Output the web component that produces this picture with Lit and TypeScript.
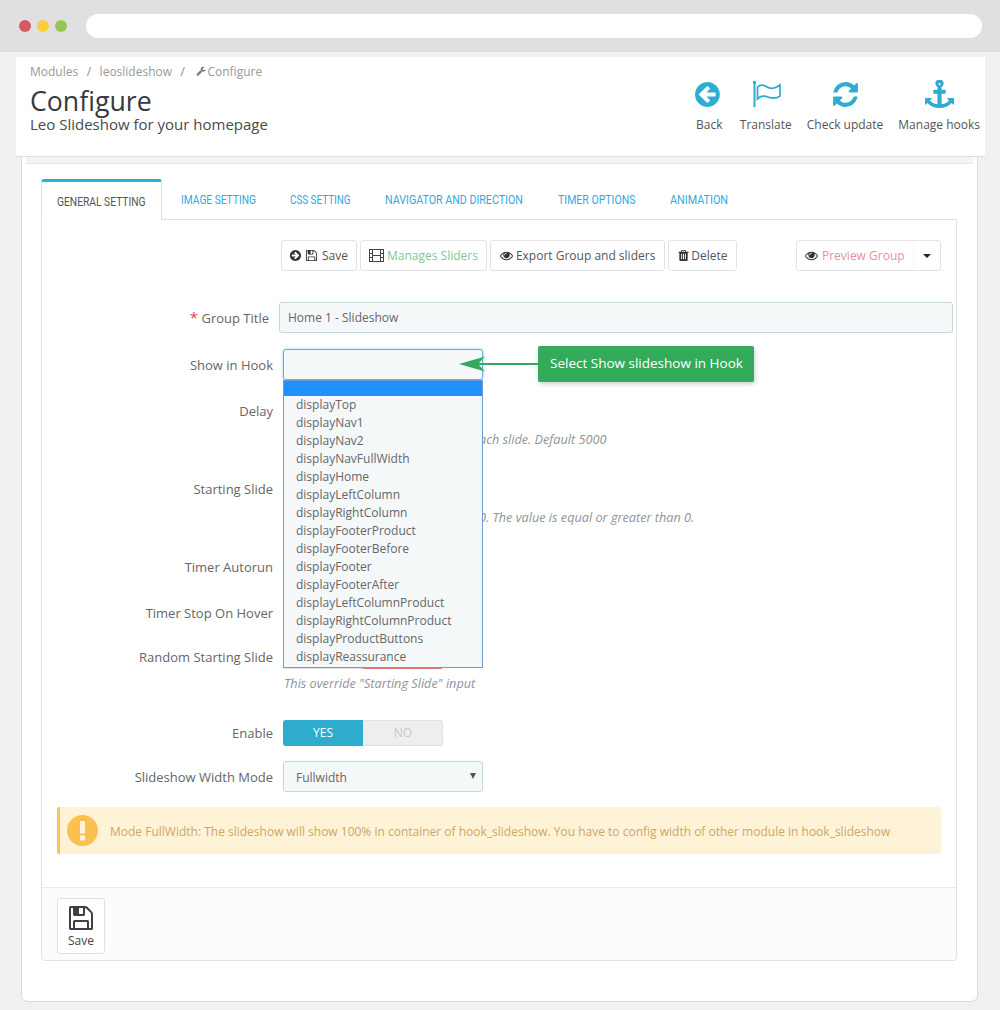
import { LitElement, html, css } from "lit";
import { customElement } from "lit/decorators.js";

const P: Record<string, string> = {
  arrowLeft: "M1280 960v-128q0-26-19-45t-45-19h-502l189-189q19-19 19-45t-19-45l-91-91q-18-18-45-18t-45 18l-362 362-91 91q-18 18-18 45t18 45l91 91 362 362q18 18 45 18t45-18l91-91q18-18 18-45t-18-45l-189-189h502q26 0 45-19t19-45zm256-64q0 209-103 385.5t-279.5 279.5-385.5 103-385.5-103-279.5-279.5-103-385.5 103-385.5 279.5-279.5 385.5-103 385.5 103 279.5 279.5 103 385.5z",
  refresh: "M1639 1056q0 5-1 7-64 268-268 434.5t-478 166.5q-146 0-282.5-55t-243.5-157l-129 129q-19 19-45 19t-45-19-19-45v-448q0-26 19-45t45-19h448q26 0 45 19t19 45-19 45l-137 137q71 66 161 102t187 36q134 0 250-65t186-179q11-17 53-117 8-23 30-23h192q13 0 22.5 9.5t9.5 22.5zm25-800v448q0 26-19 45t-45 19h-448q-26 0-45-19t-19-45 19-45l138-138q-148-137-349-137-134 0-250 65t-186 179q-11 17-53 117-8 23-30 23h-199q-13 0-22.5-9.5t-9.5-22.5v-7q65-268 270-434.5t480-166.5q146 0 284 55.5t245 156.5l130-129q19-19 45-19t45 19 19 45z",
  anchor: "M960 256q0-26-19-45t-45-19-45 19-19 45 19 45 45 19 45-19 19-45zm832 888v352q0 22-20 30-8 2-12 2-12 0-23-9l-93-93q-119 143-318.5 226.5t-429.5 83.5-429.5-83.5-318.5-226.5l-93 93q-9 9-23 9-4 0-12-2-20-8-20-30v-352q0-14 9-23t23-9h352q22 0 30 20 8 19-7 35l-100 100q67 91 189.5 153.5t271.5 82.5v-647h-192q-26 0-45-19t-19-45v-128q0-26 19-45t45-19h192v-163q-58-34-93-92.5t-35-128.5q0-106 75-181t181-75 181 75 75 181q0 70-35 128.5t-93 92.5v163h192q26 0 45 19t19 45v128q0 26-19 45t-45 19h-192v647q149-20 271.5-82.5t189.5-153.5l-100-100q-15-16-7-35 8-20 30-20h352q14 0 23 9t9 23z",
  floppy: "M512 1536h768v-384h-768v384zm896 0h128v-896q0-14-10-38.5t-20-34.5l-281-281q-10-10-34-20t-39-10v416q0 40-28 68t-68 28h-576q-40 0-68-28t-28-68v-416h-128v1280h128v-416q0-40 28-68t68-28h832q40 0 68 28t28 68v416zm-384-928v-320q0-13-9.5-22.5t-22.5-9.5h-192q-13 0-22.5 9.5t-9.5 22.5v320q0 13 9.5 22.5t22.5 9.5h192q13 0 22.5-9.5t9.5-22.5zm640 32v928q0 40-28 68t-68 28h-1344q-40 0-68-28t-28-68v-1344q0-40 28-68t68-28h928q40 0 88 20t76 48l280 280q28 28 48 76t20 88z",
  eye: "M1664 960q-152-236-381-353 61 104 61 225 0 185-131.5 316.5t-316.5 131.5-316.5-131.5-131.5-316.5q0-121 61-225-229 117-381 353 133 205 333.5 326.5t434.5 121.5 434.5-121.5 333.5-326.5zm-720-384q0-20-14-34t-34-14q-125 0-214.5 89.5t-89.5 214.5q0 20 14 34t34 14 34-14 14-34q0-86 61-147t147-61q20 0 34-14t14-34zm848 384q0 34-20 69-140 230-376.5 368.5t-499.5 138.5-499.5-139-376.5-368q-20-35-20-69t20-69q140-229 376.5-368t499.5-139 499.5 139 376.5 368q20 35 20 69z",
  trash: "M704 1376v-704q0-14-9-23t-23-9h-64q-14 0-23 9t-9 23v704q0 14 9 23t23 9h64q14 0 23-9t9-23zm256 0v-704q0-14-9-23t-23-9h-64q-14 0-23 9t-9 23v704q0 14 9 23t23 9h64q14 0 23-9t9-23zm256 0v-704q0-14-9-23t-23-9h-64q-14 0-23 9t-9 23v704q0 14 9 23t23 9h64q14 0 23-9t9-23zm-544-992h448l-48-117q-7-9-17-11h-317q-10 2-17 11zm928 32v64q0 14-9 23t-23 9h-96v948q0 83-47 143.5t-113 60.5h-832q-66 0-113-58.5t-47-141.5v-952h-96q-14 0-23-9t-9-23v-64q0-14 9-23t23-9h309l70-167q15-37 54-63t79-26h320q40 0 79 26t54 63l70 167h309q14 0 23 9t9 23z",
  wrench: "M448 1472q0-26-19-45t-45-19-45 19-19 45 19 45 45 19 45-19 19-45zm644-420l-682 682q-37 37-90 37-52 0-91-37l-106-108q-38-36-38-90 0-53 38-91l681-681q39 98 114.5 173.5t173.5 114.5zm634-435q0 39-23 106-47 134-164.5 217.5t-258.5 83.5q-185 0-316.5-131.5t-131.5-316.5 131.5-316.5 316.5-131.5q58 0 121.5 16.5t107.5 46.5q16 11 16 28t-16 28l-293 169v224l193 107q5-3 79-48.5t135.5-81 70.5-35.5q15 0 23.5 10t8.5 25z",
};

const fa = (name: string, cls: string) =>
  html`<svg class=${cls} viewBox="0 0 1792 1792" fill="currentColor"><path d=${P[name]}></path></svg>`;

const HOOKS = [
  "displayTop", "displayNav1", "displayNav2", "displayNavFullWidth", "displayHome",
  "displayLeftColumn", "displayRightColumn", "displayFooterProduct", "displayFooterBefore",
  "displayFooter", "displayFooterAfter", "displayLeftColumnProduct", "displayRightColumnProduct",
  "displayProductButtons", "displayReassurance",
];
const TABS = [
  { t: "IMAGE SETTING", w: 109, s: 0.785 },
  { t: "CSS SETTING", w: 95, s: 0.76 },
  { t: "NAVIGATOR AND DIRECTION", w: 173, s: 0.82 },
  { t: "TIMER OPTIONS", w: 112, s: 0.81 },
  { t: "ANIMATION", w: 80, s: 0.83 },
];

@customElement("app-root")
export class AppRoot extends LitElement {
  static styles = css`
    :host { display: block; height: 1010px; overflow: hidden; background: #eff1f3; font-family: "Open Sans", sans-serif; font-size: 12px; color: #666; }
    .chrome { height: 52px; background: #e0e0e0; display: flex; align-items: center; padding: 0 18px 0 19px; box-sizing: border-box; }
    .dot { width: 12px; height: 12px; border-radius: 50%; margin-right: 6px; }
    .red { background: #d9585f; } .yellow { background: #fdcd3c; } .green { background: #97c653; }
    .address { flex: 1; height: 24px; background: #fff; border-radius: 12px; margin-left: 13px; }

    .head { position: relative; z-index: 1; margin: 5px 15px 0 16px; height: 100px; box-sizing: border-box; background: #fff; border-bottom: 1px solid #ddd; display: flex; justify-content: space-between; padding: 0 5px 0 14px; }
    .crumbs { display: flex; align-items: center; height: 16px; margin-top: 6px; color: #999; }
    .sep { margin: 0 8.5px; color: #888; }
    .wrench { width: 10px; height: 10px; color: #777; margin: 0 1px 0 3px; }
    h1 { margin: 8px 0 0; font-size: 26.7px; font-weight: 400; line-height: 28px; color: #363a41; }
    .sub { font-size: 15px; line-height: 18px; color: #4a4a4a; }
    .tools { display: flex; gap: 15px; padding-top: 22px; }
    .tool { display: flex; flex-direction: column; align-items: center; color: #555; line-height: 16px; }
    .mr1 { margin-right: 1px; }
    .tico { width: 29px; height: 29px; color: #2eacd1; margin: 1px 0 8px; display: block; }
    .ticon-flag { width: 32px; height: 32px; margin-bottom: 6px; display: block; color: #2eacd1; }

    .card { margin: 0 22px 0 21px; height: 845px; box-sizing: border-box; background: #fff; border: 1px solid #d8dadd; border-top: 0; border-radius: 0 0 6px 6px; padding: 0 20px 0 19px; display: flex; flex-direction: column; }
    .strip { height: 7px; margin: 0 -16px 15px -15px; background: #f4f4f4; border-bottom: 1px solid #e8e8e8; box-sizing: border-box; }
    .tabs { display: flex; height: 41px; align-items: flex-start; position: relative; z-index: 1; margin-bottom: -1px; }
    .tab { font-family: "Roboto", sans-serif; font-size: 13px; color: #2fa9e4; padding-top: 13px; line-height: 16px; white-space: nowrap; box-sizing: border-box; }
    .tab span { display: inline-block; transform-origin: left center; }
    .tab.first { width: 121px; height: 41px; margin-right: 19px; padding: 12px 0 0 15px; color: #555; background: #fff; border: 1px solid #ddd; border-top: 3px solid #1fb5d6; border-bottom: 0; border-radius: 3px 3px 0 0; }

    .panel { height: 742px; box-sizing: border-box; border: 1px solid #dfe1e3; border-radius: 0 0 4px 4px; display: flex; flex-direction: column; padding-top: 20px; }
    .toolbar { display: flex; gap: 3px; padding: 0 15px 0 239px; height: 31px; }
    .btn { display: flex; align-items: center; gap: 3px; height: 31px; box-sizing: border-box; padding: 0 8px; background: #fff; border: 1px solid #e3e3e3; border-radius: 3px; color: #555; white-space: nowrap; }
    .btn.p7 { padding-left: 6px; gap: 4px; }
    .btn.p9 { padding: 0 9px; }
    .btn.g1 { gap: 1px; }
    .i12 { width: 13px; height: 13px; color: #333; flex: none; }
    .flip { transform: scaleX(-1); }
    .mint { color: #7fc79a; } .pink { color: #e8909d; }
    .film { width: 15px; height: 13px; color: #444; flex: none; }
    .split { margin-left: auto; display: flex; height: 31px; width: 145px; box-sizing: border-box; border: 1px solid #e3e3e3; border-radius: 3px; }
    .split .btn { border: 0; flex: 1; height: 29px; padding-left: 8px; gap: 4px; }
    .caret { width: 28px; display: flex; align-items: center; justify-content: center; border-left: 1px solid #f7f7f7; }
    .caret i { border: 4px solid transparent; border-top: 4px solid #222; border-bottom: 0; }

    .form { display: flex; flex-direction: column; margin-top: 31px; }
    .row { display: grid; grid-template-columns: 231px 200px; column-gap: 10px; align-items: center; position: relative; }
    .row.wide { grid-template-columns: 227px 674px; }
    .label { text-align: right; font-size: 13px; color: #666; }
    .lift .label { margin-bottom: 2px; }
    .drop .label { margin-top: 2px; }
    .star { color: #e2434b; font-size: 15px; line-height: 1; }
    .input { height: 31px; box-sizing: border-box; background: #f5f8f9; border: 1px solid #c7d6db; border-radius: 3px; padding: 0 8px; display: flex; align-items: center; color: #666; }
    .focus { border-color: #62aee6; box-shadow: 0 0 3px #9ccbef; }
    .pad12 { padding: 2px 0 0 12px; position: relative; }
    .tri { position: absolute; right: 6px; top: 11px; border: 3.5px solid transparent; border-top: 6px solid #555; border-bottom: 0; }
    .hint { font-style: italic; font-size: 12.7px; color: #8f9498; line-height: 18px; margin-left: 242px; white-space: nowrap; }
    .hint.tail { margin-left: 437px; }
    .switch { width: 160px; height: 26px; display: flex; background: #eee; border-radius: 3px; box-shadow: inset 0 0 0 1px #e2e2e2; color: #c8c8c8; text-align: center; line-height: 26px; }
    .switch span { width: 80px; }
    .switch .on { background: #2eacce; color: #fff; border-radius: 3px 0 0 3px; }
    .switch .off { background: #e5737b; border-radius: 0 3px 3px 0; }

    .list { position: absolute; left: 241px; top: 31px; width: 200px; box-sizing: border-box; background: #f5f8f9; border: 1px solid #6f9ad3; padding-bottom: 1px; z-index: 2; }
    .list .sel { height: 15px; background: #1e90ff; }
    .list div { height: 18px; line-height: 18px; padding-left: 12px; color: #666; font-size: 12px; }
    .callout { position: absolute; left: 496px; top: -3px; width: 216px; height: 36px; box-sizing: border-box; padding-left: 12px; background: #34ab5b; color: #fff; font-size: 13.5px; line-height: 35px; border-radius: 2px; box-shadow: 1px 2px 5px rgba(0,0,0,.2); z-index: 3; white-space: nowrap; }
    .arrow { position: absolute; left: 417px; top: 7px; width: 80px; height: 16px; z-index: 3; color: #34ab5b; }

    .m16 { margin-top: 16px; } .m3 { margin-top: 3px; } .m26 { margin-top: 26px; } .m28 { margin-top: 28px; } .m20 { margin-top: 20px; } .m17 { margin-top: 17px; } .m5 { margin-top: 5px; } .m15 { margin-top: 15px; }

    .alert { margin: 15px 15px 0; height: 47px; display: flex; align-items: center; gap: 12px; box-sizing: border-box; padding-left: 7px; background: #fff3d7; border-left: 3px solid #fcc35c; border-radius: 2px; color: #d0a564; white-space: nowrap; }
    .alert span { margin-top: 1px; }
    .bang { width: 31px; height: 31px; flex: none; }

    .foot { margin-top: auto; height: 73px; box-sizing: border-box; border-top: 1px solid #e8eaec; background: #fbfcfd; padding: 10px 15px; border-radius: 0 0 4px 4px; }
    .savebig { width: 48px; height: 56px; box-sizing: border-box; background: #fff; border: 1px solid #e0e0e0; border-radius: 3px; display: flex; flex-direction: column; align-items: center; padding-top: 5px; color: #444; line-height: 16px; }
    .bigfloppy { width: 28px; height: 28px; color: #3f3f46; margin-bottom: 1px; }
  `;

  row(label: string, control: unknown, cls = "") {
    return html`<div class="row ${cls}"><div class="label">${label}</div>${control}</div>`;
  }

  render() {
    const hiddenOn = html`<div class="switch"><span class="on"></span><span></span></div>`;
    const hiddenOff = html`<div class="switch"><span></span><span class="off"></span></div>`;
    return html`
      <div class="chrome">
        <span class="dot red"></span><span class="dot yellow"></span><span class="dot green"></span>
        <div class="address"></div>
      </div>

      <div class="head">
        <div>
          <div class="crumbs"><span>Modules</span><span class="sep">/</span><span>leoslideshow</span><span class="sep">/</span>${fa("wrench", "wrench")}<span>Configure</span></div>
          <h1>Configure</h1>
          <div class="sub">Leo Slideshow for your homepage</div>
        </div>
        <div class="tools">
          <div class="tool mr1">${fa("arrowLeft", "tico")}<span>Back</span></div>
          <div class="tool">
            <svg class="ticon-flag" viewBox="0 0 32 32" fill="none" stroke="currentColor" stroke-width="1.7">
              <path d="M4.500 3.500V28" stroke-width="2"></path>
              <circle cx="4.500" cy="3.500" r="1.700" fill="currentColor" stroke="none"></circle>
              <path d="M7.500 8C10 5.500 13 5.500 17 8S25 9.500 30 6V17C26 20 22 19.500 18 18S10 17 7.500 20Z"></path>
            </svg>
            <span>Translate</span>
          </div>
          <div class="tool">${fa("refresh", "tico")}<span>Check update</span></div>
          <div class="tool">${fa("anchor", "tico")}<span>Manage hooks</span></div>
        </div>
      </div>

      <div class="card">
        <div class="strip"></div>
        <div class="tabs">
          <div class="tab first"><span style="transform:scaleX(0.79)">GENERAL SETTING</span></div>
          ${TABS.map((t) => html`<div class="tab" style="width:${t.w}px"><span style="transform:scaleX(${t.s})">${t.t}</span></div>`)}
        </div>
        <div class="panel">
          <div class="toolbar">
            <div class="btn p7">${fa("arrowLeft", "i12 flip")}${fa("floppy", "i12")}<span>Save</span></div>
            <div class="btn">
              <svg class="film" viewBox="0 0 15 13" fill="none" stroke="currentColor"><rect x=".5" y=".5" width="14" height="12"></rect><path d="M3.500 .5v12M11.500 .5v12M.5 4.500h3M.5 8.500h3M11.500 4.500h3M11.500 8.500h3M3.500 6.500h8"></path></svg>
              <span class="mint">Manages Sliders</span>
            </div>
            <div class="btn p9">${fa("eye", "i12")}<span>Export Group and sliders</span></div>
            <div class="btn g1">${fa("trash", "i12")}<span>Delete</span></div>
            <div class="split">
              <div class="btn">${fa("eye", "i12")}<span class="pink">Preview Group</span></div>
              <div class="caret"><i></i></div>
            </div>
          </div>

          <div class="form">
            <div class="row wide">
              <div class="label"><span class="star">*</span> Group Title</div>
              <div class="input">Home 1 - Slideshow</div>
            </div>
            <div class="row m16">
              <div class="label">Show in Hook</div>
              <div class="input focus"></div>
              <div class="list">
                <div class="sel"></div>
                ${HOOKS.map((h) => html`<div>${h}</div>`)}
              </div>
              <svg class="arrow" viewBox="0 0 80 16">
                <path d="M0 8 26 .5 20 7H80V9H20L26 15.500Z" fill="currentColor"></path>
              </svg>
              <div class="callout">Select Show slideshow in Hook</div>
            </div>
            ${this.row("Delay", html`<div class="input"></div>`, "m16 lift")}
            <div class="hint tail m3">ach slide. Default 5000</div>
            ${this.row("Starting Slide", html`<div class="input"></div>`, "m26 lift")}
            <div class="hint tail m3">0. The value is equal or greater than 0.</div>
            ${this.row("Timer Autorun", hiddenOn, "m28")}
            ${this.row("Timer Stop On Hover", hiddenOn, "m20")}
            ${this.row("Random Starting Slide", hiddenOff, "m17 drop")}
            <div class="hint m5">This override "Starting Slide" input</div>
            ${this.row("Enable", html`<div class="switch"><span class="on">YES</span><span>NO</span></div>`, "m28")}
            ${this.row("Slideshow Width Mode", html`<div class="input pad12">Fullwidth<i class="tri"></i></div>`, "m15")}
          </div>

          <div class="alert">
            <svg class="bang" viewBox="0 0 31 31"><circle cx="15.500" cy="15.500" r="15.500" fill="#fcc050"></circle><rect x="13" y="6" width="5" height="12.500" fill="#fff3d7"></rect><rect x="13" y="20.500" width="5" height="5" fill="#fff3d7"></rect></svg>
            <span>Mode FullWidth: The slideshow will show 100% in container of hook_slideshow. You have to config width of other module in hook_slideshow</span>
          </div>

          <div class="foot">
            <div class="savebig">${fa("floppy", "bigfloppy")}<span>Save</span></div>
          </div>
        </div>
      </div>
    `;
  }
}
